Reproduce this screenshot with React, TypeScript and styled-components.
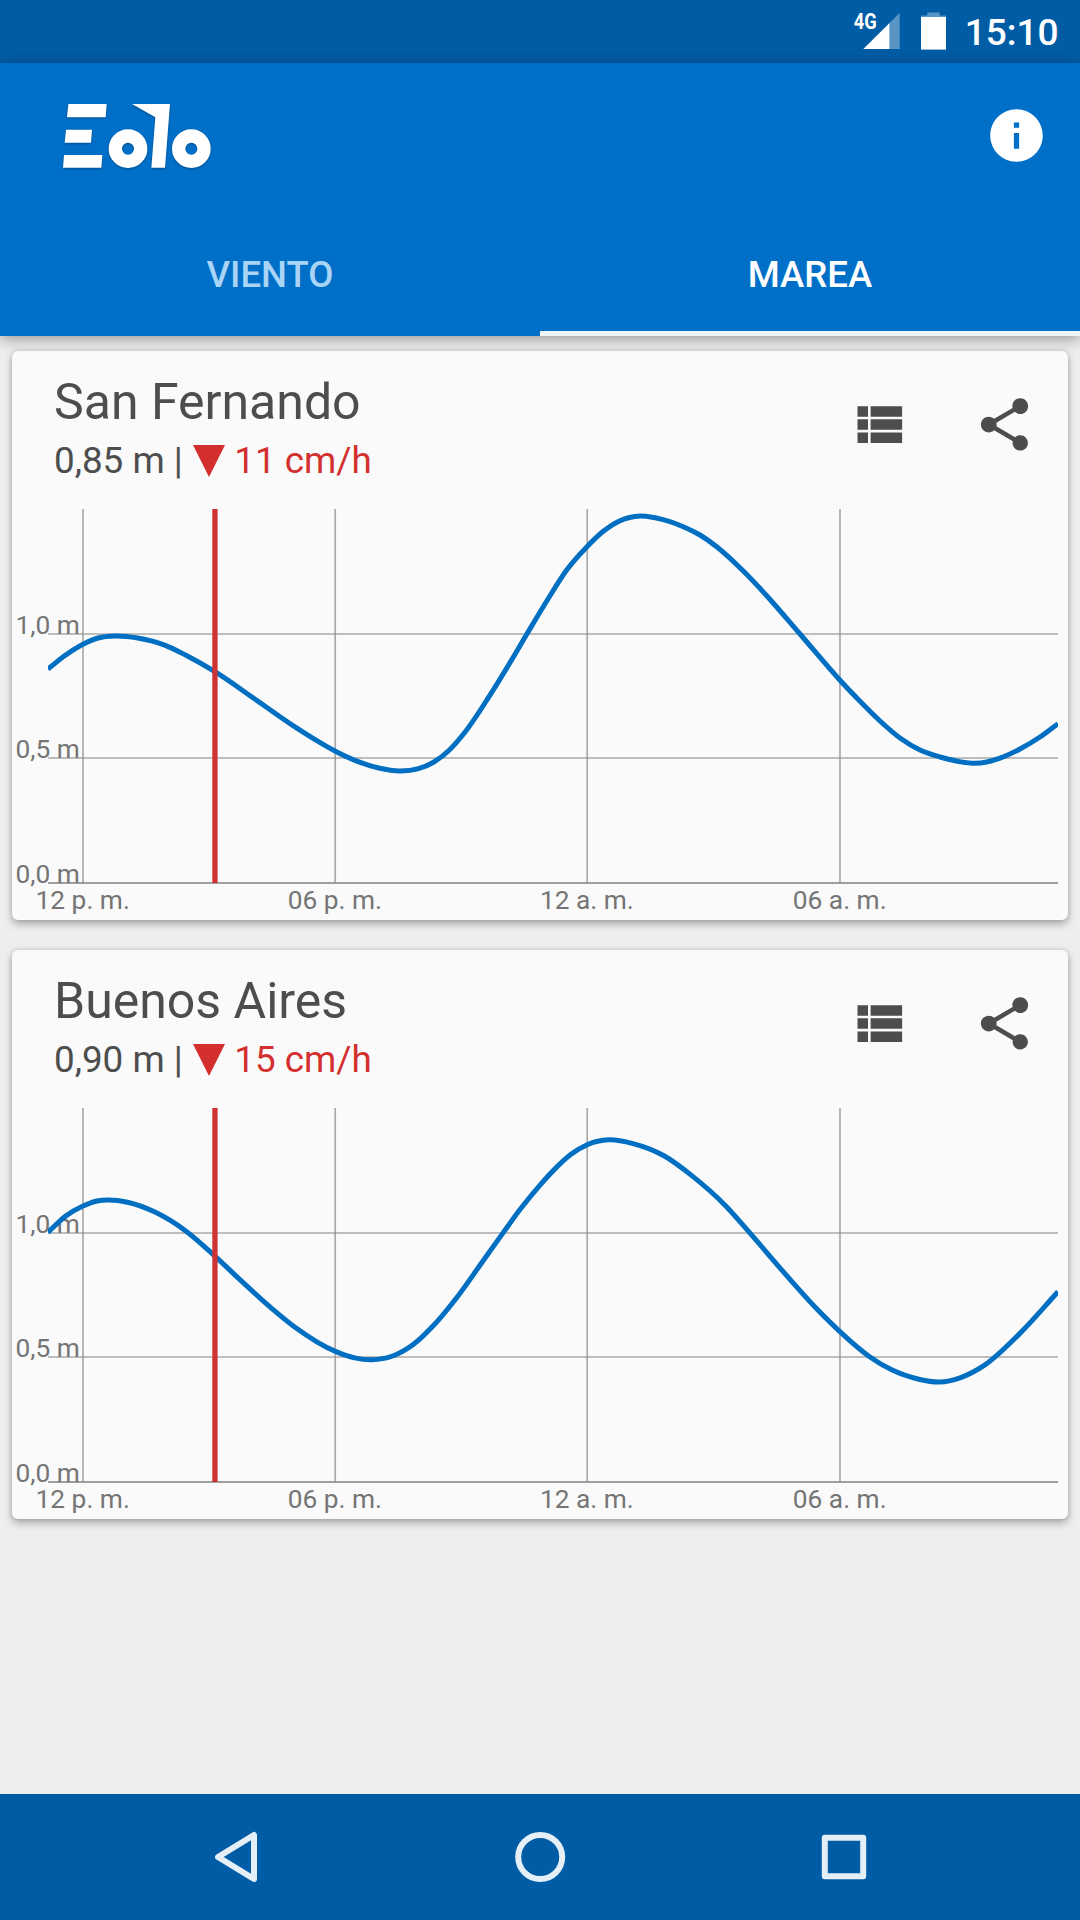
import React from "react";
import styled, { createGlobalStyle } from "styled-components";

const GlobalStyle = createGlobalStyle`
  body {
    margin: 0;
    background: #eeeeee;
  }
`;

const Screen = styled.div`
  display: flex;
  flex-direction: column;
  width: 1080px;
  height: 1920px;
  overflow: hidden;
  background: #eeeeee;
  font-family: Roboto, "Noto Sans", sans-serif;
`;

const StatusBar = styled.div`
  display: flex;
  align-items: center;
  justify-content: flex-end;
  flex: none;
  box-sizing: border-box;
  height: 63px;
  padding-right: 21.5px;
  background: #005ca5;
  color: #fff;
`;

const Clock = styled.span`
  margin-left: 15px;
  padding-top: 2px;
  font-size: 37px;
  font-weight: 500;
  line-height: 44px;
`;

const AppBar = styled.header`
  display: flex;
  flex-direction: column;
  flex: none;
  height: 273px;
  background: #006fc8;
  box-shadow: 0 3px 14px rgba(0, 0, 0, 0.38);
`;

const Toolbar = styled.div`
  display: flex;
  align-items: flex-start;
  justify-content: space-between;
  box-sizing: border-box;
  height: 147px;
  padding: 17px 32px 0 40px;
`;

const LogoSvg = styled.svg`
  display: block;
  fill: #fff;
  filter: drop-shadow(0 1px 1px rgba(0, 0, 0, 0.3));
`;

const InfoButton = styled.button`
  display: flex;
  margin: 24px 0 0;
  padding: 0;
  border: 0;
  background: none;
  color: #fff;
`;

const Tabs = styled.nav`
  display: grid;
  grid-template-columns: 1fr 1fr;
  flex: 1;
`;

const Tab = styled.button<{ $active?: boolean }>`
  box-sizing: border-box;
  margin: 0;
  padding: 8px 0 0;
  border: 0;
  border-bottom: 5px solid ${(p) => (p.$active ? "#f2f5f7" : "transparent")};
  background: none;
  color: ${(p) => (p.$active ? "#fff" : "#a9d4f5")};
  font: 500 36.6px/42px Roboto, "Noto Sans", sans-serif;
`;

const CardList = styled.main`
  display: flex;
  flex-direction: column;
  flex: 1;
  gap: 30px;
  padding: 15px 12px;
`;

const Card = styled.section`
  display: flex;
  flex-direction: column;
  height: 569px;
  border-radius: 6px;
  background: #fafafa;
  box-shadow: 0 4px 8px rgba(0, 0, 0, 0.29), 0 0 4px rgba(0, 0, 0, 0.14);
`;

const CardHeader = styled.div`
  display: flex;
  align-items: flex-start;
  justify-content: space-between;
  box-sizing: border-box;
  height: 149px;
  padding: 21px 32px 0 42px;
`;

const Place = styled.h2`
  margin: 0;
  color: #4d4d4d;
  font-size: 50px;
  font-weight: 400;
  line-height: 60px;
`;

const Reading = styled.div`
  display: flex;
  align-items: center;
  color: #4d4d4d;
  font-size: 36.8px;
  line-height: 58px;
  white-space: pre;
`;

const Rate = styled.span`
  display: flex;
  align-items: center;
  gap: 9.5px;
  margin-left: 10px;
  color: #d32f2f;

  svg {
    margin-top: -1px;
  }
`;

const Actions = styled.div`
  display: flex;
  gap: 63.5px;
  padding-top: 21px;
`;

const ActionButton = styled.button`
  display: flex;
  margin: 0;
  padding: 0;
  border: 0;
  background: none;
  color: #4d4d4d;
`;

const ChartSvg = styled.svg`
  display: block;
  flex: none;

  text {
    fill: #757575;
    font: 400 26.3px Roboto, "Noto Sans", sans-serif;
  }
`;

const NavBar = styled.footer`
  display: flex;
  flex: none;
  height: 126px;
  background: #005ca5;
`;

const NavSvg = styled.svg`
  display: block;
  fill: none;
  stroke: #e5eff7;
  stroke-width: 6;
  stroke-linejoin: round;
`;

type Point = [number, number];

const SAN_FERNANDO: Point[] = [
  [47.9, 169], [65.4, 155.3], [83, 144.3], [98.1, 138], [115.4, 136],
  [137.7, 138], [165.3, 145.3], [186, 155.3], [214.9, 171.7], [254.8, 199],
  [296.1, 227.7], [316.8, 240.7], [335.4, 251.3], [358.1, 261.7], [378.8, 268],
  [399.4, 271], [418.4, 268.7], [433.9, 262], [449.4, 250], [464.9, 232.3],
  [489, 196.7], [509.6, 163.3], [526.9, 134], [548, 99], [566.7, 70],
  [587, 46.7], [603.3, 31.3], [620, 20.7], [640, 16], [663.3, 19.7],
  [683.3, 26.7], [700, 35], [716.7, 46.7], [743.3, 71], [766.7, 95.7],
  [800, 134], [840, 180.2], [860, 201.3], [880, 221], [900, 238],
  [920, 250], [940, 257], [960, 261.7], [975, 263.3], [986.7, 262],
  [1000, 258.2], [1020, 249], [1040, 237], [1058, 223.7],
];

const BUENOS_AIRES: Point[] = [
  [47.9, 133.4], [65.4, 117.2], [83, 107], [97, 102], [108.5, 100.9],
  [127.4, 103.2], [155, 113.1], [187.7, 133.4], [214.9, 157.1],
  [241, 181.6], [275.5, 212.6], [296.1, 229.1], [316.8, 242.8], [335.4, 252.4],
  [354.7, 258.9], [371.9, 260.8], [392.6, 257], [413.2, 245.5], [433.9, 226],
  [458, 196.9], [482.1, 163.2], [503.4, 133.4], [520, 110.6], [540, 86.1],
  [557.2, 67.6], [571, 55.3], [587.2, 45.7], [608.9, 40.8],
  [633, 44.6], [664, 56.8], [691.5, 76.4], [726, 107.2], [749.4, 133.4],
  [781, 170.1], [815.5, 208.5], [839.9, 232.6], [868.9, 257.2], [891.2, 270.6],
  [918.8, 280.2], [939.5, 283], [960.1, 278.8], [984.2, 266.4], [1018.7, 235.6],
  [1058, 192.8],
];

/** Cubic path through every point; each tangent weighs both neighbours by distance. */
function smoothPath(points: Point[]): string {
  const chord = (i: number) =>
    (points[i + 1][1] - points[i][1]) / (points[i + 1][0] - points[i][0]);
  const last = points.length - 1;
  const slopes = points.map((p, i) => {
    if (i === 0) return chord(0);
    if (i === last) return chord(last - 1);
    const before = p[0] - points[i - 1][0];
    const after = points[i + 1][0] - p[0];
    return (after * chord(i - 1) + before * chord(i)) / (before + after);
  });
  let d = `M${points[0][0]} ${points[0][1]}`;
  for (let i = 0; i < last; i++) {
    const [x0, y0] = points[i];
    const [x1, y1] = points[i + 1];
    const t = (x1 - x0) / 3;
    d += `C${x0 + t} ${y0 + slopes[i] * t} ${x1 - t} ${y1 - slopes[i + 1] * t} ${x1} ${y1}`;
  }
  return d;
}

const HOURS = [
  { x: 83, label: "12 p. m." },
  { x: 335.2, label: "06 p. m." },
  { x: 587.2, label: "12 a. m." },
  { x: 840, label: "06 a. m." },
];

const LEVELS = [
  { y: 134, label: "1,0 m" },
  { y: 258, label: "0,5 m" },
  { y: 383, label: "0,0 m" },
];

function TideChart({ id, points }: { id: string; points: Point[] }) {
  return (
    <ChartSvg width="1056" height="420" viewBox="12 0 1056 420">
      <clipPath id={id}>
        <rect x="48" y="9" width="1010" height="374" />
      </clipPath>
      {HOURS.map((h) => (
        <g key={h.label}>
          <line x1={h.x} x2={h.x} y1="9" y2="383" stroke="#808080" strokeOpacity="0.65" strokeWidth="1.7" />
          <text x={h.x - 0.3} y="409" textAnchor="middle">{h.label}</text>
        </g>
      ))}
      {LEVELS.map((l) => (
        <g key={l.label}>
          <line
            x1="48"
            x2="1058"
            y1={l.y}
            y2={l.y}
            stroke="#808080"
            strokeOpacity={l.y === 383 ? 1 : 0.65}
            strokeWidth="1.7"
          />
          <text x="79.8" y={l.y} textAnchor="end">{l.label}</text>
        </g>
      ))}
      <path d={smoothPath(points)} clipPath={`url(#${id})`} fill="none" stroke="#006fc2" strokeWidth="5" />
      <rect x="212.3" y="9" width="5.3" height="374" fill="#cf3232" />
    </ChartSvg>
  );
}

function Logo() {
  return (
    <LogoSvg width="200" height="110" viewBox="0 0 600 330">
      <path d="M85 72H200L197 112H81ZM78 149H156L153 188H74ZM72 225H187L184 263H69Z" />
      <path d="M276 72H390L375 263H334L346 112Z" />
      <circle cx="264" cy="206" r="38" fill="none" stroke="#fff" strokeWidth="40" />
      <circle cx="454" cy="206" r="38" fill="none" stroke="#fff" strokeWidth="40" />
    </LogoSvg>
  );
}

function StatusIcons() {
  return (
    <svg width="98" height="63" viewBox="853 0 98 63" fill="#fff">
      <text x="854.7" y="29" textLength="23" lengthAdjust="spacingAndGlyphs" fontFamily="Roboto, sans-serif" fontSize="21.5" fontWeight="700">
        4G
      </text>
      <path d="M864.3 49L890.5 23V49Z" />
      <path d="M890.5 23L900.7 12.7V49H890.5Z" fillOpacity=".35" />
      <rect x="922" y="17" width="25" height="32.6" />
      <path d="M928.3 12.5H940.7V15.5H947V17H922V15.5H928.3Z" fillOpacity=".35" />
    </svg>
  );
}

function InfoIcon() {
  return (
    <svg width="63" height="63" viewBox="0 0 24 24" fill="currentColor">
      <path d="M12 2C6.48 2 2 6.48 2 12s4.48 10 10 10 10-4.48 10-10S17.52 2 12 2zm1 15h-2v-6h2v6zm0-8h-2V7h2v2z" />
    </svg>
  );
}

function ListIcon() {
  return (
    <svg width="63" height="63" viewBox="0 0 24 24" fill="currentColor">
      <path d="M4 14h4v-4H4v4zm0 5h4v-4H4v4zM4 9h4V5H4v4zm5 5h12v-4H9v4zm0 5h12v-4H9v4zM9 5v4h12V5H9z" />
    </svg>
  );
}

function ShareIcon() {
  return (
    <svg width="63" height="63" viewBox="0 0 24 24" fill="currentColor">
      <path d="M18 16.08c-.76 0-1.44.3-1.96.77L8.91 12.7c.05-.23.09-.46.09-.7s-.04-.47-.09-.7l7.05-4.11c.54.5 1.25.81 2.04.81 1.66 0 3-1.34 3-3s-1.34-3-3-3-3 1.34-3 3c0 .24.04.47.09.7L8.04 9.81C7.5 9.31 6.79 9 6 9c-1.66 0-3 1.34-3 3s1.34 3 3 3c.79 0 1.5-.31 2.04-.81l7.12 4.16c-.05.21-.08.43-.08.65 0 1.61 1.31 2.92 2.92 2.92s2.92-1.31 2.92-2.92-1.31-2.92-2.92-2.92z" />
    </svg>
  );
}

function FallingIcon() {
  return (
    <svg width="32" height="32" viewBox="0 0 32 32" fill="currentColor">
      <path d="M0 0H32L16 32Z" />
    </svg>
  );
}

interface TideCardProps {
  id: string;
  place: string;
  level: string;
  rate: string;
  points: Point[];
}

function TideCard({ id, place, level, rate, points }: TideCardProps) {
  return (
    <Card>
      <CardHeader>
        <div>
          <Place>{place}</Place>
          <Reading>
            {level} |
            <Rate>
              <FallingIcon />
              {rate}
            </Rate>
          </Reading>
        </div>
        <Actions>
          <ActionButton aria-label="Lista"><ListIcon /></ActionButton>
          <ActionButton aria-label="Compartir"><ShareIcon /></ActionButton>
        </Actions>
      </CardHeader>
      <TideChart id={id} points={points} />
    </Card>
  );
}

export default function App() {
  return (
    <Screen>
      <GlobalStyle />
      <StatusBar>
        <StatusIcons />
        <Clock>15:10</Clock>
      </StatusBar>
      <AppBar>
        <Toolbar>
          <Logo />
          <InfoButton aria-label="Información"><InfoIcon /></InfoButton>
        </Toolbar>
        <Tabs>
          <Tab>VIENTO</Tab>
          <Tab $active>MAREA</Tab>
        </Tabs>
      </AppBar>
      <CardList>
        <TideCard id="plot-sf" place="San Fernando" level="0,85 m" rate="11 cm/h" points={SAN_FERNANDO} />
        <TideCard id="plot-ba" place="Buenos Aires" level="0,90 m" rate="15 cm/h" points={BUENOS_AIRES} />
      </CardList>
      <NavBar>
        <NavSvg width="1080" height="126" viewBox="0 1794 1080 126">
          <path d="M218 1857L254 1835V1879Z" />
          <circle cx="540.2" cy="1857" r="22" />
          <rect x="824.8" y="1837.8" width="38.4" height="38.4" />
        </NavSvg>
      </NavBar>
    </Screen>
  );
}
